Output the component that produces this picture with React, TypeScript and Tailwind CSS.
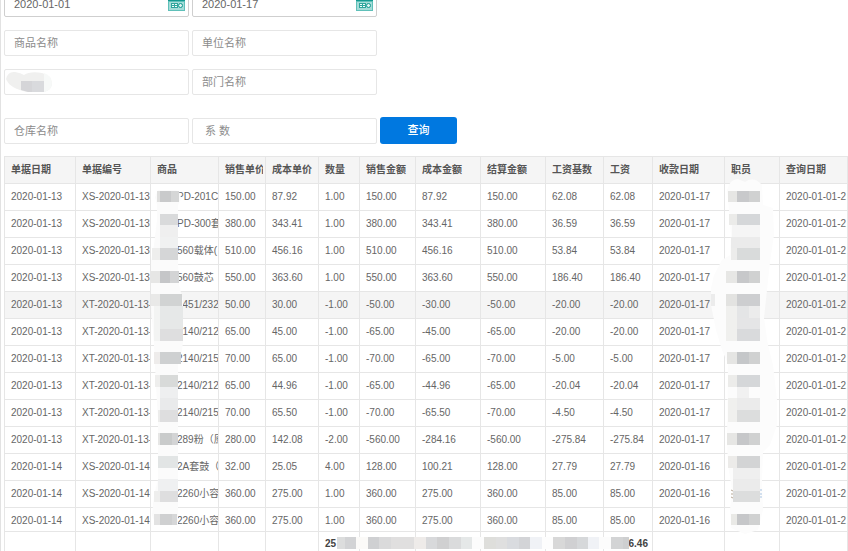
import { useState } from 'react'

const font = 'font-["Liberation_Sans","Noto_Sans_CJK_SC",sans-serif]'

const columns = [
    { label: '单据日期', width: 'w-[71px]' },
    { label: '单据编号', width: 'w-[75px]' },
    { label: '商品', width: 'w-[68px]' },
    { label: '销售单价', width: 'w-[47px]' },
    { label: '成本单价', width: 'w-[53px]' },
    { label: '数量', width: 'w-[41px]' },
    { label: '销售金额', width: 'w-[56px]' },
    { label: '成本金额', width: 'w-[65px]' },
    { label: '结算金额', width: 'w-[65px]' },
    { label: '工资基数', width: 'w-[58px]' },
    { label: '工资', width: 'w-[49px]' },
    { label: '收款日期', width: 'w-[72px]' },
    { label: '职员', width: 'w-[55px]' },
    { label: '查询日期', width: 'w-auto' },
]

// fecha, código, producto, precio, costo, cantidad, venta, costo total, liquidación, salario, cobro
const rows = [
    ['2020-01-13', 'XS-2020-01-13', 'PD-201C', '150.00', '87.92', '1.00', '150.00', '87.92', '150.00', '62.08', '2020-01-17'],
    ['2020-01-13', 'XS-2020-01-13', 'PD-300套', '380.00', '343.41', '1.00', '380.00', '343.41', '380.00', '36.59', '2020-01-17'],
    ['2020-01-13', 'XS-2020-01-13', '560载体(', '510.00', '456.16', '1.00', '510.00', '456.16', '510.00', '53.84', '2020-01-17'],
    ['2020-01-13', 'XS-2020-01-13', '560鼓芯', '550.00', '363.60', '1.00', '550.00', '363.60', '550.00', '186.40', '2020-01-17'],
    ['2020-01-13', 'XT-2020-01-13-', '2451/232', '50.00', '30.00', '-1.00', '-50.00', '-30.00', '-50.00', '-20.00', '2020-01-17'],
    ['2020-01-13', 'XT-2020-01-13-', '2140/212', '65.00', '45.00', '-1.00', '-65.00', '-45.00', '-65.00', '-20.00', '2020-01-17'],
    ['2020-01-13', 'XT-2020-01-13-', '2140/215', '70.00', '65.00', '-1.00', '-70.00', '-65.00', '-70.00', '-5.00', '2020-01-17'],
    ['2020-01-13', 'XT-2020-01-13-', '2140/212', '65.00', '44.96', '-1.00', '-65.00', '-44.96', '-65.00', '-20.04', '2020-01-17'],
    ['2020-01-13', 'XT-2020-01-13-', '2140/215', '70.00', '65.50', '-1.00', '-70.00', '-65.50', '-70.00', '-4.50', '2020-01-17'],
    ['2020-01-13', 'XT-2020-01-13-', '289粉（原', '280.00', '142.08', '-2.00', '-560.00', '-284.16', '-560.00', '-275.84', '2020-01-17'],
    ['2020-01-14', 'XS-2020-01-14', '2A套鼓（', '32.00', '25.05', '4.00', '128.00', '100.21', '128.00', '27.79', '2020-01-16'],
    ['2020-01-14', 'XS-2020-01-14', '2260小容', '360.00', '275.00', '1.00', '360.00', '275.00', '360.00', '85.00', '2020-01-16'],
    ['2020-01-14', 'XS-2020-01-14', '2260小容', '360.00', '275.00', '1.00', '360.00', '275.00', '360.00', '85.00', '2020-01-16'],
]

// x, mosaic row, width, rows spanned, colour
type Block = [number, number, number, number, string]

const productBlocks: Block[] = [
    [157, 0, 3, 1, '#e0e0df'], [160, 0, 11, 1, '#c9cacb'], [171, 0, 8, 1, '#d5d6d6'],
    [160, 2, 18, 1, '#d9dadb'], [160, 3, 18, 1, '#efefef'], [160, 4, 18, 1, '#f0f1f1'],
    [152, 5, 8, 1, '#eeeeed'], [160, 5, 18, 1, '#d5d6d7'],
    [151, 7, 9, 1, '#e6e6e5'], [160, 7, 10, 1, '#c5c6c8'], [170, 7, 9, 1, '#d3d4d5'],
    [151, 9, 9, 1, '#e9e9e8'], [160, 9, 22, 1, '#d1d3d3'],
    [154, 10, 6, 3, '#f3f4f3'], [160, 10, 23, 2, '#e6e8e8'], [160, 12, 23, 1, '#dededf'],
    [154, 14, 6, 1, '#eeeceb'], [160, 14, 21, 1, '#ced0d1'],
    [155, 16, 5, 1, '#eeeeed'], [160, 16, 18, 1, '#d8dad9'],
    [160, 17, 18, 1, '#eeeff0'], [160, 18, 18, 1, '#e9eaeb'], [158, 19, 2, 1, '#ececeb'], [160, 19, 18, 1, '#dededf'],
    [158, 21, 2, 1, '#e6e6e5'], [160, 21, 12, 1, '#c9cbcb'], [172, 21, 6, 1, '#d3d4d5'],
    [158, 23, 20, 1, '#e2e5e5'], [158, 25, 20, 1, '#eff0f1'],
    [154, 26, 6, 1, '#eeeeed'], [160, 26, 18, 1, '#dededf'],
    [154, 28, 6, 1, '#e3e3e3'], [160, 28, 12, 1, '#cfd0d1'], [172, 28, 5, 1, '#d6d7d8'],
]

const staffBlocks: Block[] = [
    [728, 0, 9, 1, '#e6e6e4'], [737, 0, 12, 1, '#c8c9cb'], [749, 0, 11, 1, '#d0d1d1'],
    [729, 2, 8, 1, '#ebebe9'], [737, 2, 23, 1, '#d5d7d9'],
    [732, 3, 28, 1, '#f5f5f5'], [731, 4, 29, 1, '#ebebeb'], [731, 5, 6, 1, '#ececeb'], [737, 5, 23, 1, '#d9dbdb'],
    [726, 7, 11, 1, '#e7e7e5'], [737, 7, 12, 1, '#c7c8ca'], [749, 7, 11, 1, '#d0d1d1'],
    [711, 9, 4, 1, '#ececec'], [726, 9, 11, 1, '#e3e3e1'], [737, 9, 23, 1, '#cdced0'],
    [726, 10, 11, 3, '#f0f0ee'], [737, 10, 12, 1, '#e4e5e6'], [749, 10, 11, 1, '#ececec'], [737, 11, 23, 1, '#e5e5e6'], [737, 12, 23, 1, '#d9dadc'],
    [727, 14, 10, 1, '#e5e5e3'], [737, 14, 12, 1, '#c5c7c9'], [749, 14, 11, 1, '#d0d1d1'],
    [728, 16, 9, 1, '#ececea'], [737, 16, 23, 1, '#d5d7d9'],
    [737, 17, 12, 1, '#f1f1f1'], [728, 18, 9, 2, '#f0f0ee'], [737, 18, 23, 1, '#ebebeb'], [737, 19, 23, 1, '#dcdddd'],
    [727, 21, 10, 1, '#e6e6e4'], [737, 21, 12, 1, '#c6c7c9'], [749, 21, 11, 1, '#d0d1d1'],
    [728, 23, 9, 1, '#ecebe9'], [737, 23, 23, 1, '#d3d4d5'],
    [733, 24, 27, 1, '#efefef'], [733, 25, 27, 1, '#ebebeb'], [733, 26, 27, 1, '#dcdddd'],
    [731, 28, 6, 1, '#e9e9e6'], [737, 28, 12, 1, '#c6c7c9'], [749, 28, 11, 1, '#d0d1d1'],
]

const totalBlocks: Block[] = [
    [337, 30, 8, 1, '#dcdddd'], [345, 30, 11, 1, '#d2d3d5'], [356, 30, 12, 1, '#fbfaf8'],
    [368, 30, 11, 1, '#cfd0d2'], [379, 30, 12, 1, '#dadadb'], [391, 30, 23, 1, '#e0dfdf'], [414, 30, 12, 1, '#eeebe9'],
    [426, 30, 11, 1, '#d8d9db'], [437, 30, 12, 1, '#d0d0d1'], [449, 30, 12, 1, '#dadbdc'], [461, 30, 11, 1, '#e5e8e8'], [472, 30, 12, 1, '#fcfcfc'],
    [484, 30, 12, 1, '#dededb'], [496, 30, 11, 1, '#dfdfdf'], [507, 30, 12, 1, '#d9dbdf'], [519, 30, 11, 1, '#d3d4d7'], [530, 30, 12, 1, '#f0f2f6'], [542, 30, 11, 1, '#fdfdfd'],
    [553, 30, 12, 1, '#d8d8d8'], [565, 30, 12, 1, '#d0d0d2'], [577, 30, 11, 1, '#d6d8da'], [588, 30, 11, 1, '#f0f2f6'], [599, 30, 12, 1, '#fcfcfc'],
    [611, 30, 12, 1, '#d3d4d5'], [623, 30, 6, 1, '#cecfd0'],
]

const rowTop = (row: number) => Math.round(34.5 + row * 11.55)

function Mosaic({ blocks }: { blocks: Block[] }) {
    return (
        <g>
            {blocks.map(([x, row, w, span, fill]) => (
                <rect key={`${x}-${row}`} x={x} y={rowTop(row)} width={w} height={rowTop(row + span) - rowTop(row)} fill={fill} />
            ))}
        </g>
    )
}

function CalendarIcon() {
    return (
        <svg width="17" height="16" viewBox="0 0 17 16" shapeRendering="crispEdges">
            <rect width="17" height="16" fill="#5fc0b9" />
            <rect width="17" height="6" fill="#12998f" />
            <rect x="1" y="7" width="15" height="8" fill="#a5dcd8" />
            <rect x="3" y="8" width="7" height="5" fill="#f2fbfa" />
            <path d="M3 8.500H10M3 10.500H10M3 12.500H10M3.500 8V13M6.500 8V13M9.500 8V13" stroke="#2fa69d" />
            <circle cx="12.500" cy="10.500" r="2" fill="#e0f4f2" stroke="#12998f" shapeRendering="auto" />
        </svg>
    )
}

function DateField({ label, initial }: { label: string; initial: string }) {
    const [value, setValue] = useState(initial)
    return (
        <div className="relative w-[185px]">
            <input
                aria-label={label}
                value={value}
                onChange={(e) => setValue(e.target.value)}
                className="block h-[26px] w-full rounded-xs border border-[#cfcfcf] pl-[9px] pr-6 text-[11px] text-[#666]"
            />
            <button type="button" aria-label="选择日期" className="absolute right-1 bottom-[6px]">
                <CalendarIcon />
            </button>
        </div>
    )
}

function TextField({ label, placeholder = label }: { label: string; placeholder?: string }) {
    return (
        <input
            aria-label={label}
            placeholder={placeholder}
            className="block h-[26px] w-[185px] rounded-xs border border-[#e6e6e6] px-[9px] text-[11px] text-[#555] placeholder:text-[#8c8c8c]"
        />
    )
}

export default function App() {
    return (
        <div className={`min-h-screen overflow-hidden border-l border-[#e2e2e2] bg-white pl-[3px] ${font}`}>
            <form onSubmit={(e) => e.preventDefault()} className="-mt-[9px] flex flex-col gap-[13px]">
                <div className="flex gap-[3px]">
                    <DateField label="开始日期" initial="2020-01-01" />
                    <DateField label="结束日期" initial="2020-01-17" />
                </div>
                <div className="flex gap-[3px]">
                    <TextField label="商品名称" />
                    <TextField label="单位名称" />
                </div>
                <div className="flex gap-[3px]">
                    <div className="relative">
                        <TextField label="职员名称" placeholder="" />
                        <svg className="absolute top-[2px] left-[2px]" width="46" height="22" viewBox="0 0 46 22">
                            <path d="M0 8Q2 0 9 1Q15 2 18 4Q24 0 36 2Q45 4 46 12Q46 19 38 21H22Q4 18 0 8Z" fill="#f0f0ef" />
                            <path d="M38 2Q45 4 46 12Q46 19 38 21Z" fill="#f7f9f8" />
                            <path d="M15 10H38V21H22L15 19Z" fill="#d5d5d8" />
                            <path d="M26 10H38V21H26Z" fill="#d9dadd" />
                        </svg>
                    </div>
                    <TextField label="部门名称" />
                </div>
                <div className="mt-[9px] flex items-center gap-[3px]">
                    <TextField label="仓库名称" />
                    <TextField label="系数" placeholder=" 系 数" />
                    <button type="submit" className="h-[27px] w-[77px] rounded-[3px] bg-[#0078e0] text-[11px] font-medium text-white">
                        查询
                    </button>
                </div>
            </form>

            <div className="relative mt-3">
                <table className="w-full table-fixed border-collapse text-left text-[10px] leading-4 text-[#666]">
                    <thead>
                        <tr className="h-[27px] bg-[#f5f5f5] text-[#555]">
                            {columns.map((c) => (
                                <th key={c.label} className={`${c.width} border border-[#e6e6e6] pr-[2px] pl-[6px] font-bold`}>
                                    <div className="overflow-hidden whitespace-nowrap">{c.label}</div>
                                </th>
                            ))}
                        </tr>
                    </thead>
                    <tbody>
                        {rows.map(([date, code, product, price, cost, qty, sale, costTotal, settle, wage, paid], i) => {
                            const cells = [date, code, product, price, cost, qty, sale, costTotal, settle, wage, wage, paid, '', '2020-01-01-2']
                            return (
                                <tr key={i} className={`${i === 4 ? 'bg-[#f5f5f5]' : ''} ${i === rows.length - 1 ? 'h-6' : 'h-[27px]'}`}>
                                    {cells.map((cell, j) => (
                                        <td
                                            key={j}
                                            className={`overflow-hidden border border-[#e6e6e6] py-0 align-top whitespace-nowrap ${j === 2 ? 'pl-[26px]' : 'pl-[6px]'}`}
                                        >
                                            <div className="mt-[5px]">{cell}</div>
                                        </td>
                                    ))}
                                </tr>
                            )
                        })}
                    </tbody>
                    <tfoot>
                        <tr className="h-6 font-bold text-[#444]">
                            {columns.map((c, j) => (
                                <td key={c.label} className={`border-x border-[#e6e6e6] pl-[6px] ${j === 10 ? 'pr-1 text-right' : ''}`}>
                                    {j === 5 && '25'}
                                    {j === 10 && '6.46'}
                                </td>
                            ))}
                        </tr>
                    </tfoot>
                </table>
                <svg className="pointer-events-none absolute top-0 -left-[4px]" width="848" height="395" viewBox="0 0 848 395">
                    {/* brush strokes under the mosaic */}
                    <path
                        d="M158 34H176Q181 36 181 42L178 49V106L179 129L183 144V185L182 195L178 204V369H156L152 359L154 339L158 324V264L156 229L154 189L151 150V104L154 89L157 64V49L155 41Z"
                        fill="#fbfbfb"
                    />
                    <path
                        d="M727 34Q730 23 738 23L745 26Q754 20 762 29L763 49L773 52L774 79L770 106L767 134L764 162L768 189L773 209L777 244V269L770 289L763 296L762 324L763 354L758 374L745 378L731 372L730 354L732 334L728 309L727 284L728 208L722 194L716 174L711 149V132L714 119L722 104L730 99L731 79L729 54Z"
                        fill="#fcfcfc"
                    />
                    <Mosaic blocks={productBlocks} />
                    <Mosaic blocks={staffBlocks} />
                    <Mosaic blocks={totalBlocks} />
                    <path d="M731 334l2 1M731 338h2M731 341l2 1" stroke="#b9aa98" />
                    <path d="M760 334h2M760 338h2M760 341h2" stroke="#a9c4e2" />
                </svg>
            </div>
        </div>
    )
}
